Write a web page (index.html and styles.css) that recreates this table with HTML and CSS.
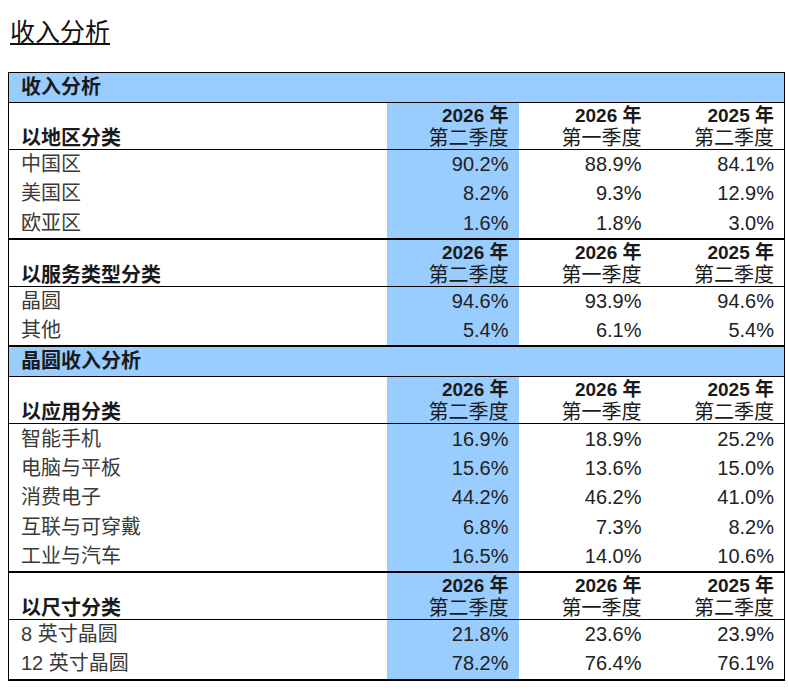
FILE: index.html
```html
<!DOCTYPE html>
<html lang="zh-CN">
<head>
<meta charset="utf-8">
<title>收入分析</title>
<link rel="stylesheet" href="styles.css">
</head>
<body>
<h1 class="page-title">收入分析</h1>
<table class="rev">
  <colgroup>
    <col class="c-label"><col class="c-q"><col class="c-n"><col class="c-n">
  </colgroup>
  <tbody>
    <tr class="band"><td colspan="4">收入分析</td></tr>
    <tr class="head">
      <td class="lbl">以地区分类</td>
      <td class="hi"><b>2026 年</b><br>第二季度</td>
      <td><b>2026 年</b><br>第一季度</td>
      <td><b>2025 年</b><br>第二季度</td>
    </tr>
    <tr class="row"><td class="name">中国区</td><td class="hi">90.2%</td><td>88.9%</td><td>84.1%</td></tr>
    <tr class="row"><td class="name">美国区</td><td class="hi">8.2%</td><td>9.3%</td><td>12.9%</td></tr>
    <tr class="row"><td class="name">欧亚区</td><td class="hi">1.6%</td><td>1.8%</td><td>3.0%</td></tr>

    <tr class="head sep">
      <td class="lbl">以服务类型分类</td>
      <td class="hi"><b>2026 年</b><br>第二季度</td>
      <td><b>2026 年</b><br>第一季度</td>
      <td><b>2025 年</b><br>第二季度</td>
    </tr>
    <tr class="row"><td class="name">晶圆</td><td class="hi">94.6%</td><td>93.9%</td><td>94.6%</td></tr>
    <tr class="row"><td class="name">其他</td><td class="hi">5.4%</td><td>6.1%</td><td>5.4%</td></tr>

    <tr class="band sep"><td colspan="4">晶圆收入分析</td></tr>
    <tr class="head">
      <td class="lbl">以应用分类</td>
      <td class="hi"><b>2026 年</b><br>第二季度</td>
      <td><b>2026 年</b><br>第一季度</td>
      <td><b>2025 年</b><br>第二季度</td>
    </tr>
    <tr class="row"><td class="name">智能手机</td><td class="hi">16.9%</td><td>18.9%</td><td>25.2%</td></tr>
    <tr class="row"><td class="name">电脑与平板</td><td class="hi">15.6%</td><td>13.6%</td><td>15.0%</td></tr>
    <tr class="row"><td class="name">消费电子</td><td class="hi">44.2%</td><td>46.2%</td><td>41.0%</td></tr>
    <tr class="row"><td class="name">互联与可穿戴</td><td class="hi">6.8%</td><td>7.3%</td><td>8.2%</td></tr>
    <tr class="row"><td class="name">工业与汽车</td><td class="hi">16.5%</td><td>14.0%</td><td>10.6%</td></tr>

    <tr class="head sep">
      <td class="lbl">以尺寸分类</td>
      <td class="hi"><b>2026 年</b><br>第二季度</td>
      <td><b>2026 年</b><br>第一季度</td>
      <td><b>2025 年</b><br>第二季度</td>
    </tr>
    <tr class="row"><td class="name">8 英寸晶圆</td><td class="hi">21.8%</td><td>23.6%</td><td>23.9%</td></tr>
    <tr class="row"><td class="name">12 英寸晶圆</td><td class="hi">78.2%</td><td>76.4%</td><td>76.1%</td></tr>
  </tbody>
</table>
</body>
</html>
```
FILE: styles.css
```css
html, body {
  margin: 0;
  padding: 0;
  background: #ffffff;
}
body {
  font-family: "Liberation Sans", "Noto Sans CJK SC", sans-serif;
  color: #1a1a1a;
}
.page-title {
  margin: 0;
  padding: 17px 0 0 10px;
  height: 55px;
  box-sizing: border-box;
  font-size: 25px;
  line-height: 30px;
  font-weight: normal;
  text-decoration: underline;
  text-decoration-thickness: 2px;
  text-underline-offset: 2px;
  color: #111;
}
.rev {
  margin: 17px 0 0 8px;
  width: 776px;
  border-collapse: collapse;
  table-layout: fixed;
  border: 1px solid #000;
  border-bottom: 2px solid #000;
}
.c-label { width: 378px; }
.c-q { width: 132px; }
.c-n { width: 133px; }
.rev td {
  padding: 0 10px 0 0;
  text-align: right;
  font-size: 20px;
  white-space: nowrap;
}
.rev td.hi {
  background: #99ccff;
}
.band td {
  background: #99ccff;
  text-align: left;
  padding-left: 12px;
  font-weight: bold;
  height: 29px;
  line-height: 29px;
  border-bottom: 1px solid #000;
}
.head td {
  height: 46px;
  vertical-align: bottom;
  line-height: 22px;
  padding-bottom: 0;
  border-bottom: 1px solid #000;
}
.head td b {
  font-size: 19px;
}
.head td.lbl {
  text-align: left;
  padding-left: 12px;
  font-weight: bold;
}
.row td {
  height: 29.3px;
  line-height: 29px;
  color: #222;
}
.row td.name {
  text-align: left;
  padding-left: 12px;
  color: #3a3a3a;
}
.sep td {
  border-top: 2px solid #000;
}
```
